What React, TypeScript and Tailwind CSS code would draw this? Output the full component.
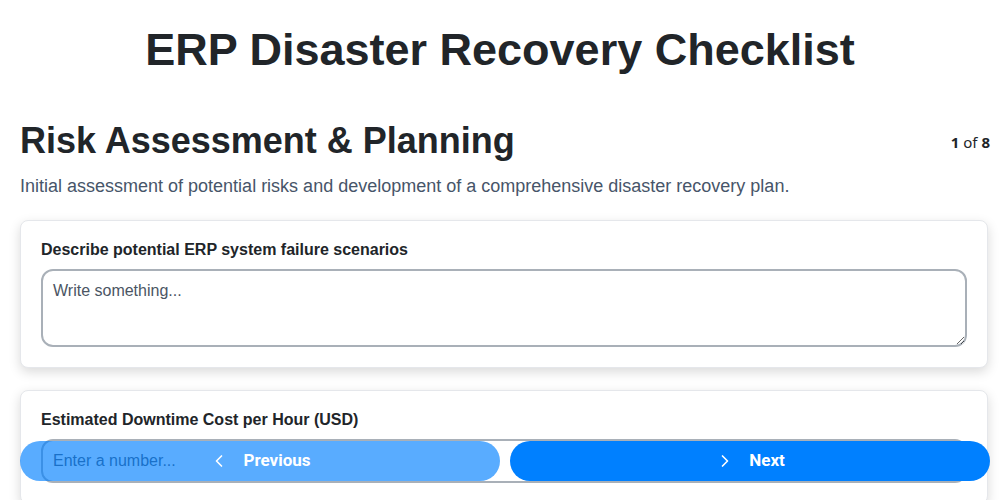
import { ChevronLeft, ChevronRight } from 'lucide-react';

export default function App() {
  return (
    <div className="h-[500px] overflow-hidden bg-white font-['Liberation_Sans',Arial,sans-serif] text-[#212529]">
      <h1 className="pt-[23px] text-center text-[45px] font-bold leading-[54px]">ERP Disaster Recovery Checklist</h1>

      <main className="pl-5 pr-[10px] pt-[42px] pb-24">
        <div className="flex items-center justify-between">
          <h2 className="text-[36px] font-bold leading-[44px]">Risk Assessment &amp; Planning</h2>
          <span className="mt-[2px] font-['Noto_Sans',sans-serif] text-[15px]">
            <b>1</b> of <b>8</b>
          </span>
        </div>
        <p className="mt-[10px] text-[18px] leading-[26px] text-[#475569]">
          Initial assessment of potential risks and development of a comprehensive disaster recovery plan.
        </p>

        <div className="mt-[21px] mr-[2px] flex flex-col gap-[22px]">
          <section className="rounded-lg border border-[#e5e7eb] bg-white px-5 pt-[19px] pb-5 shadow-[0_4px_12px_rgba(0,0,0,0.15)]">
            <label className="block text-base font-bold leading-5 text-[#212529]">
              Describe potential ERP system failure scenarios
            </label>
            <textarea
              className="mt-[9px] block h-[78px] w-full resize-y rounded-xl border-2 border-[#a9b0b8] px-[10px] pt-[8px] pb-[6px] text-base leading-6 text-[#212529] placeholder:text-[#4b5563] outline-none"
              placeholder="Write something..."
            />
          </section>

          <section className="rounded-lg border border-[#e5e7eb] bg-white px-5 pt-[19px] pb-5 shadow-[0_4px_12px_rgba(0,0,0,0.15)]">
            <label className="block text-base font-bold leading-5 text-[#212529]">
              Estimated Downtime Cost per Hour (USD)
            </label>
            <input
              type="text"
              className="mt-[9px] block h-[44px] w-full rounded-xl border-2 border-[#a9b0b8] px-[10px] text-base text-[#212529] placeholder:text-[#4b5563] outline-none"
              placeholder="Enter a number..."
            />
          </section>
        </div>
      </main>

      <div className="fixed bottom-[19px] left-5 right-[10px] flex gap-[10px] font-['Roboto',sans-serif]">
        <button className="flex h-10 flex-1 items-center justify-center gap-[14px] rounded-full bg-[#0080ff] text-[17px] font-bold text-white opacity-65">
          <ChevronLeft size={20} strokeWidth={2} />
          Previous
        </button>
        <button className="flex h-10 flex-1 items-center justify-center gap-[14px] rounded-full bg-[#0080ff] text-[17px] font-bold text-white">
          <ChevronRight size={20} strokeWidth={2} />
          Next
        </button>
      </div>
    </div>
  );
}
